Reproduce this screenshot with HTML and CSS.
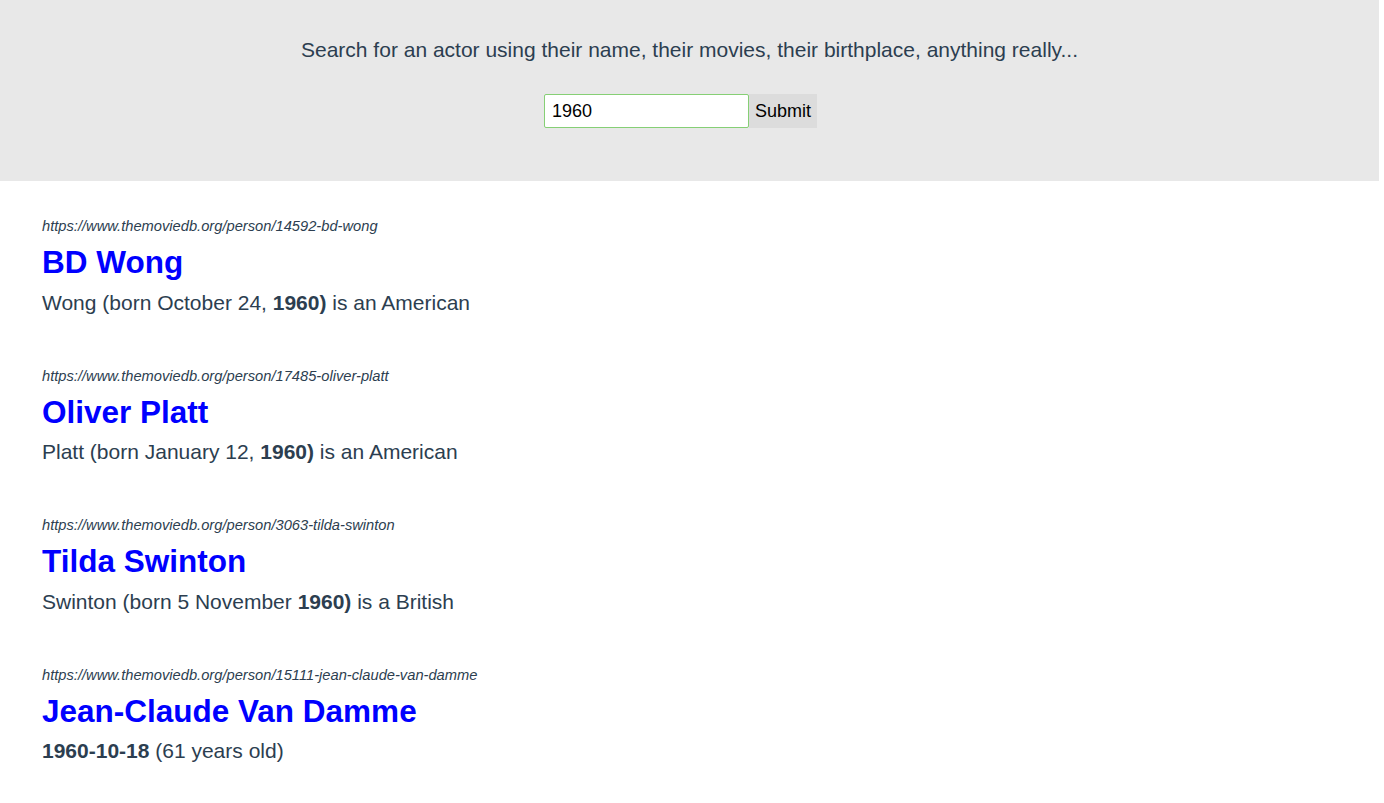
FILE: index.html
```html
<!DOCTYPE html>
<html>
<head>
<meta charset="utf-8">
<link rel="stylesheet" href="styles.css">
</head>
<body>
<header class="search">
  <p class="intro">Search for an actor using their name, their movies, their birthplace, anything really...</p>
  <form class="form">
    <input class="field" type="text" value="1960">
    <button class="submit" type="button">Submit</button>
  </form>
</header>
<main class="results">
  <article class="result">
    <div class="url">https://www.themoviedb.org/person/14592-bd-wong</div>
    <a class="name" href="#">BD Wong</a>
    <p class="desc">Wong (born October 24, <b>1960)</b> is an American</p>
  </article>
  <article class="result">
    <div class="url">https://www.themoviedb.org/person/17485-oliver-platt</div>
    <a class="name" href="#">Oliver Platt</a>
    <p class="desc">Platt (born January 12, <b>1960)</b> is an American</p>
  </article>
  <article class="result">
    <div class="url">https://www.themoviedb.org/person/3063-tilda-swinton</div>
    <a class="name" href="#">Tilda Swinton</a>
    <p class="desc">Swinton (born 5 November <b>1960)</b> is a British</p>
  </article>
  <article class="result">
    <div class="url">https://www.themoviedb.org/person/15111-jean-claude-van-damme</div>
    <a class="name" href="#">Jean-Claude Van Damme</a>
    <p class="desc"><b>1960-10-18</b> (61 years old)</p>
  </article>
</main>
</body>
</html>
```
FILE: styles.css
```css
html, body {
  margin: 0;
  padding: 0;
  background: #fff;
}
body {
  font-family: "Liberation Sans", Arial, sans-serif;
  color: #2c3e50;
}
.search {
  background: #e8e8e8;
  width: calc(100% - 5px);
  height: 181px;
  box-sizing: border-box;
  padding-top: 38px;
  display: flex;
  flex-direction: column;
  align-items: center;
}
.intro {
  margin: 0;
  font-size: 21px;
  line-height: 24px;
}
.form {
  margin-top: 32px;
  margin-right: 18px;
  display: flex;
}
.field {
  width: 205px;
  height: 34px;
  box-sizing: border-box;
  border: 1px solid #86cf75;
  border-radius: 2px;
  padding: 0 7px;
  font-family: "Liberation Sans", Arial, sans-serif;
  font-size: 18px;
  color: #000;
  background: #fff;
  outline: none;
}
.submit {
  height: 34px;
  width: 68px;
  border: none;
  background: #dcdcdc;
  font-family: "Liberation Sans", Arial, sans-serif;
  font-size: 18px;
  color: #000;
  padding: 0 6px;
}
.results {
  padding: 35px 42px 0;
}
.result {
  height: 149.5px;
  display: flex;
  flex-direction: column;
  align-items: flex-start;
}
.url {
  font-style: italic;
  font-size: 14.7px;
  line-height: 20px;
  color: #2c3e50;
}
.name {
  font-weight: bold;
  font-size: 31.5px;
  line-height: 36px;
  margin-top: 8px;
  color: #0000ff;
  text-decoration: none;
}
.desc {
  margin: 10.5px 0 0;
  font-size: 21px;
  line-height: 24px;
}
.desc b {
  font-weight: bold;
}
```
